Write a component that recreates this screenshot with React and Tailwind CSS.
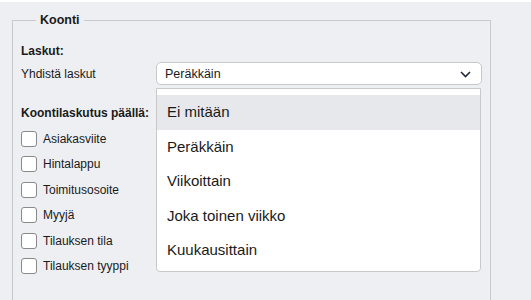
import React from "react";

const items = ["Ei mitään", "Peräkkäin", "Viikoittain", "Joka toinen viikko", "Kuukausittain"];
const checks = ["Asiakasviite", "Hintalappu", "Toimitusosoite", "Myyjä", "Tilauksen tila", "Tilauksen tyyppi"];

export default function App() {
  return (
    <div className="relative w-[531px] h-[300px] overflow-hidden bg-[#eeeff2] border-t-2 border-white text-[#1a1a1a] [font-family:'Liberation_Sans',Arial,sans-serif]">
      <fieldset className="ml-[12px] mt-[10px] w-[479px] h-[320px] border border-[#c9c9c9] px-[8px]">
        <legend className="ml-[15px] px-[4px] text-[12.5px] font-bold leading-[16px]">Koonti</legend>
        <div className="pt-[16px] text-[12px] font-bold leading-[14px]">Laskut:</div>
        <div className="mt-[4px] flex items-center">
          <div className="w-[135px] text-[12px] leading-[14px]">Yhdistä laskut</div>
          <div className="flex h-[23px] w-[326px] items-center justify-between rounded-[5px] border border-[#c9c9c9] bg-white pl-[8px] pr-[10px]">
            <span className="text-[12.5px] leading-[14px]">Peräkkäin</span>
            <svg width="11" height="7" viewBox="0 0 11 7" className="mt-[2px]">
              <path d="M1 1 L5.5 5.5 L10 1" fill="none" stroke="#1e2a3a" strokeWidth="1.6" />
            </svg>
          </div>
        </div>
        <div className="mt-[21px] text-[12px] font-bold leading-[14px]">Koontilaskutus päällä:</div>
        <div className="mt-[11px] flex flex-col gap-[9.4px]">
          {checks.map((c) => (
            <div key={c} className="flex items-center gap-[6px]">
              <div className="h-[16px] w-[16px] rounded-[3px] border border-[#8a8a8a] bg-white" />
              <span className="text-[12px] leading-[14px]">{c}</span>
            </div>
          ))}
        </div>
      </fieldset>
      <div className="absolute left-[156px] top-[86px] w-[325px] h-[184px] rounded-b-[4px] border border-[#c9c9c9] bg-white pt-[6px]">
        {items.map((it, i) => (
          <div
            key={it}
            className={`flex h-[34.5px] items-center pl-[10px] text-[15px] text-[#1a1a1a] ${i === 0 ? "bg-[#e6e8eb]" : ""}`}
          >
            {it}
          </div>
        ))}
      </div>
    </div>
  );
}
